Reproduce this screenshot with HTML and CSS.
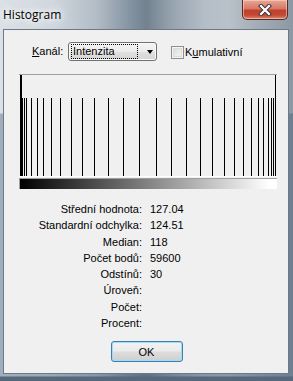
FILE: index.html
```html
<!DOCTYPE html>
<html lang="cs">
<head>
<meta charset="utf-8">
<title>Histogram</title>
<link rel="stylesheet" href="styles.css">
</head>
<body>
<div class="window">
  <div class="titlebar">
    <span class="title">Histogram</span>
    <div class="close">
      <svg width="14" height="12" viewBox="0 0 14 12">
        <path d="M3 2 L11 10 M11 2 L3 10" stroke="#3a3a3a" stroke-width="4.2" stroke-linecap="square" fill="none"/>
        <path d="M3 2 L11 10 M11 2 L3 10" stroke="#ffffff" stroke-width="2.2" stroke-linecap="square" fill="none"/>
      </svg>
    </div>
  </div>
  <div class="client">
    <div class="toolbar">
      <span class="lbl"><u>K</u>anál:</span>
      <div class="combo">
        <span class="combo-text">Intenzita</span>
        <span class="arrow"></span>
      </div>
      <div class="check">
        <span class="box"></span>
        <span class="check-text">K<u>u</u>mulativní</span>
      </div>
    </div>
    <div class="histo">
      <svg width="258" height="103" viewBox="0 0 258 103">
        <rect x="0" y="0" width="258" height="1" fill="#a0a0a0"/>
        <rect x="0" y="102" width="258" height="1" fill="#ffffff"/>
        <g fill="#000">
          <rect x="1" y="1" width="2" height="101"/>
          <rect x="3" y="24" width="1" height="78"/>
          <rect x="5" y="24" width="1" height="78"/>
          <rect x="7" y="24" width="1" height="78"/>
          <rect x="12" y="24" width="1" height="78"/>
          <rect x="18" y="24" width="1" height="78"/>
          <rect x="24" y="24" width="1" height="78"/>
          <rect x="32" y="24" width="1" height="78"/>
          <rect x="41" y="24" width="1" height="78"/>
          <rect x="52" y="24" width="1" height="78"/>
          <rect x="63" y="24" width="1" height="78"/>
          <rect x="75" y="24" width="1" height="78"/>
          <rect x="89" y="24" width="1" height="78"/>
          <rect x="104" y="24" width="1" height="78"/>
          <rect x="120" y="24" width="1" height="78"/>
          <rect x="137" y="24" width="1" height="78"/>
          <rect x="152" y="24" width="1" height="78"/>
          <rect x="167" y="24" width="1" height="78"/>
          <rect x="181" y="24" width="1" height="78"/>
          <rect x="193" y="24" width="1" height="78"/>
          <rect x="205" y="24" width="1" height="78"/>
          <rect x="215" y="24" width="1" height="78"/>
          <rect x="224" y="24" width="1" height="78"/>
          <rect x="232" y="24" width="1" height="78"/>
          <rect x="239" y="24" width="1" height="78"/>
          <rect x="244" y="24" width="1" height="78"/>
          <rect x="249" y="24" width="1" height="78"/>
          <rect x="252" y="24" width="1" height="78"/>
          <rect x="254" y="24" width="1" height="78"/>
          <rect x="256" y="1" width="1" height="101"/>
        </g>
      </svg>
    </div>
    <div class="gradient"></div>
    <div class="stats">
      <span class="k">Střední hodnota:</span><span class="v">127.04</span>
      <span class="k">Standardní odchylka:</span><span class="v">124.51</span>
      <span class="k">Median:</span><span class="v">118</span>
      <span class="k">Počet bodů:</span><span class="v">59600</span>
      <span class="k">Odstínů:</span><span class="v">30</span>
      <span class="k">Úroveň:</span><span class="v"></span>
      <span class="k">Počet:</span><span class="v"></span>
      <span class="k">Procent:</span><span class="v"></span>
    </div>
    <div class="actions">
      <button class="ok">OK</button>
    </div>
  </div>
</div>
</body>
</html>
```
FILE: styles.css
```css
* { box-sizing: border-box; }

html, body {
  margin: 0;
  padding: 0;
}

body {
  width: 293px;
  height: 381px;
  overflow: hidden;
  font-family: "Liberation Sans", Arial, sans-serif;
  font-size: 11px;
  color: #000;
}

.window {
  width: 293px;
  height: 381px;
  display: flex;
  flex-direction: column;
  background:
    linear-gradient(to bottom, transparent 0, transparent 376px, #55687c 377px),
    linear-gradient(to bottom, transparent 0, transparent 113px, rgba(50, 80, 110, 0.35) 114px),
    linear-gradient(to right, #dbe1e6 0%, #d0d7de 18%, #b2bcc6 33%, #7e8e9d 46%, #72828f 50%, #95a2ae 58%, #b5bec7 70%, #b9c1c9 78%, #a3adb7 88%, #8c98a4 100%);
}

.titlebar {
  height: 29px;
  flex: none;
  display: flex;
  align-items: flex-start;
  justify-content: space-between;
  padding-left: 3px;
}

.title {
  font-family: "Open Sans", "Noto Sans", sans-serif;
  font-size: 12px;
  line-height: 16px;
  margin-top: 7px;
  color: #000;
  text-shadow: 0 0 6px #fff, 0 0 10px #fff, 0 0 14px rgba(255,255,255,0.9);
}

.close {
  width: 46px;
  height: 20px;
  margin-right: 5px;
  border: 1px solid #5a2a24;
  border-top: none;
  border-radius: 0 0 5px 5px;
  background: linear-gradient(to bottom, #e9a795 0%, #d67866 45%, #c2402c 55%, #c24a35 80%, #d98a6e 100%);
  box-shadow: inset 0 0 0 1px rgba(255, 220, 210, 0.55);
  display: flex;
  align-items: center;
  justify-content: center;
}

.close svg { display: block; }

.client {
  flex: none;
  margin: 0 4px 0 3px;
  width: 286px;
  height: 345px;
  border: 1px solid #6e7985;
  background: #f0f0f0;
  display: flex;
  flex-direction: column;
}

.toolbar {
  display: flex;
  align-items: center;
  margin-top: 12px;
  padding-left: 28px;
  height: 19px;
}

.lbl {
  width: 36px;
  line-height: 13px;
}

.combo {
  width: 89px;
  height: 19px;
  border: 1px solid #707070;
  border-radius: 3px;
  background: linear-gradient(to bottom, #f3f3f3 0%, #ececec 50%, #e0e0e0 52%, #d6d6d6 100%);
  box-shadow: inset 0 0 0 1px #fbfbfb;
  display: flex;
  align-items: center;
  padding: 1px 0 1px 2px;
}

.combo-text {
  width: 67px;
  height: 15px;
  line-height: 13px;
  padding-left: 1px;
  border: 1px dotted #000;
}

.arrow {
  margin-left: auto;
  margin-right: 3px;
  width: 0;
  height: 0;
  border-top: 4px solid #000;
  border-left: 3.5px solid transparent;
  border-right: 3.5px solid transparent;
}

.check {
  margin-left: 14px;
  display: flex;
  align-items: center;
  gap: 1px;
}

.box {
  width: 13px;
  height: 13px;
  margin-top: 2px;
  border: 1px solid #8f8f8f;
  background: linear-gradient(135deg, #d4d4d4 0%, #e9e9e9 50%, #f8f8f8 100%);
  box-shadow: inset 0 0 0 1px #f4f4f4, inset 0 0 0 2px #dcdcdc;
}

.check-text {
  line-height: 13px;
  margin-top: 1px;
}

.histo {
  margin: 13px 0 0 15px;
  width: 258px;
  height: 103px;
}

.histo svg { display: block; }

.gradient {
  margin: 1px 0 0 15px;
  width: 258px;
  height: 11px;
  border-top: 1px solid #a0a0a0;
  border-left: 1px solid #a0a0a0;
  background: linear-gradient(to right, #000 0%, #fff 97%, #fff 100%);
}

.stats {
  margin-top: 12px;
  display: grid;
  grid-template-columns: 138px auto;
  column-gap: 8px;
  grid-auto-rows: 16.3px;
  line-height: 16.3px;
}

.k { text-align: right; }

.actions {
  display: flex;
  justify-content: center;
  margin-top: 10px;
  padding-left: 1px;
}

.ok {
  width: 72px;
  height: 21px;
  margin: 0;
  padding: 0;
  font-family: "Liberation Sans", Arial, sans-serif;
  font-size: 11px;
  color: #000;
  border: 1px solid #3c7fb1;
  border-radius: 3px;
  background: linear-gradient(to bottom, #f2f2f2 0%, #ebebeb 48%, #dddddd 52%, #cfcfcf 100%);
  box-shadow: inset 0 0 0 1px #9fdcf6;
}
```
